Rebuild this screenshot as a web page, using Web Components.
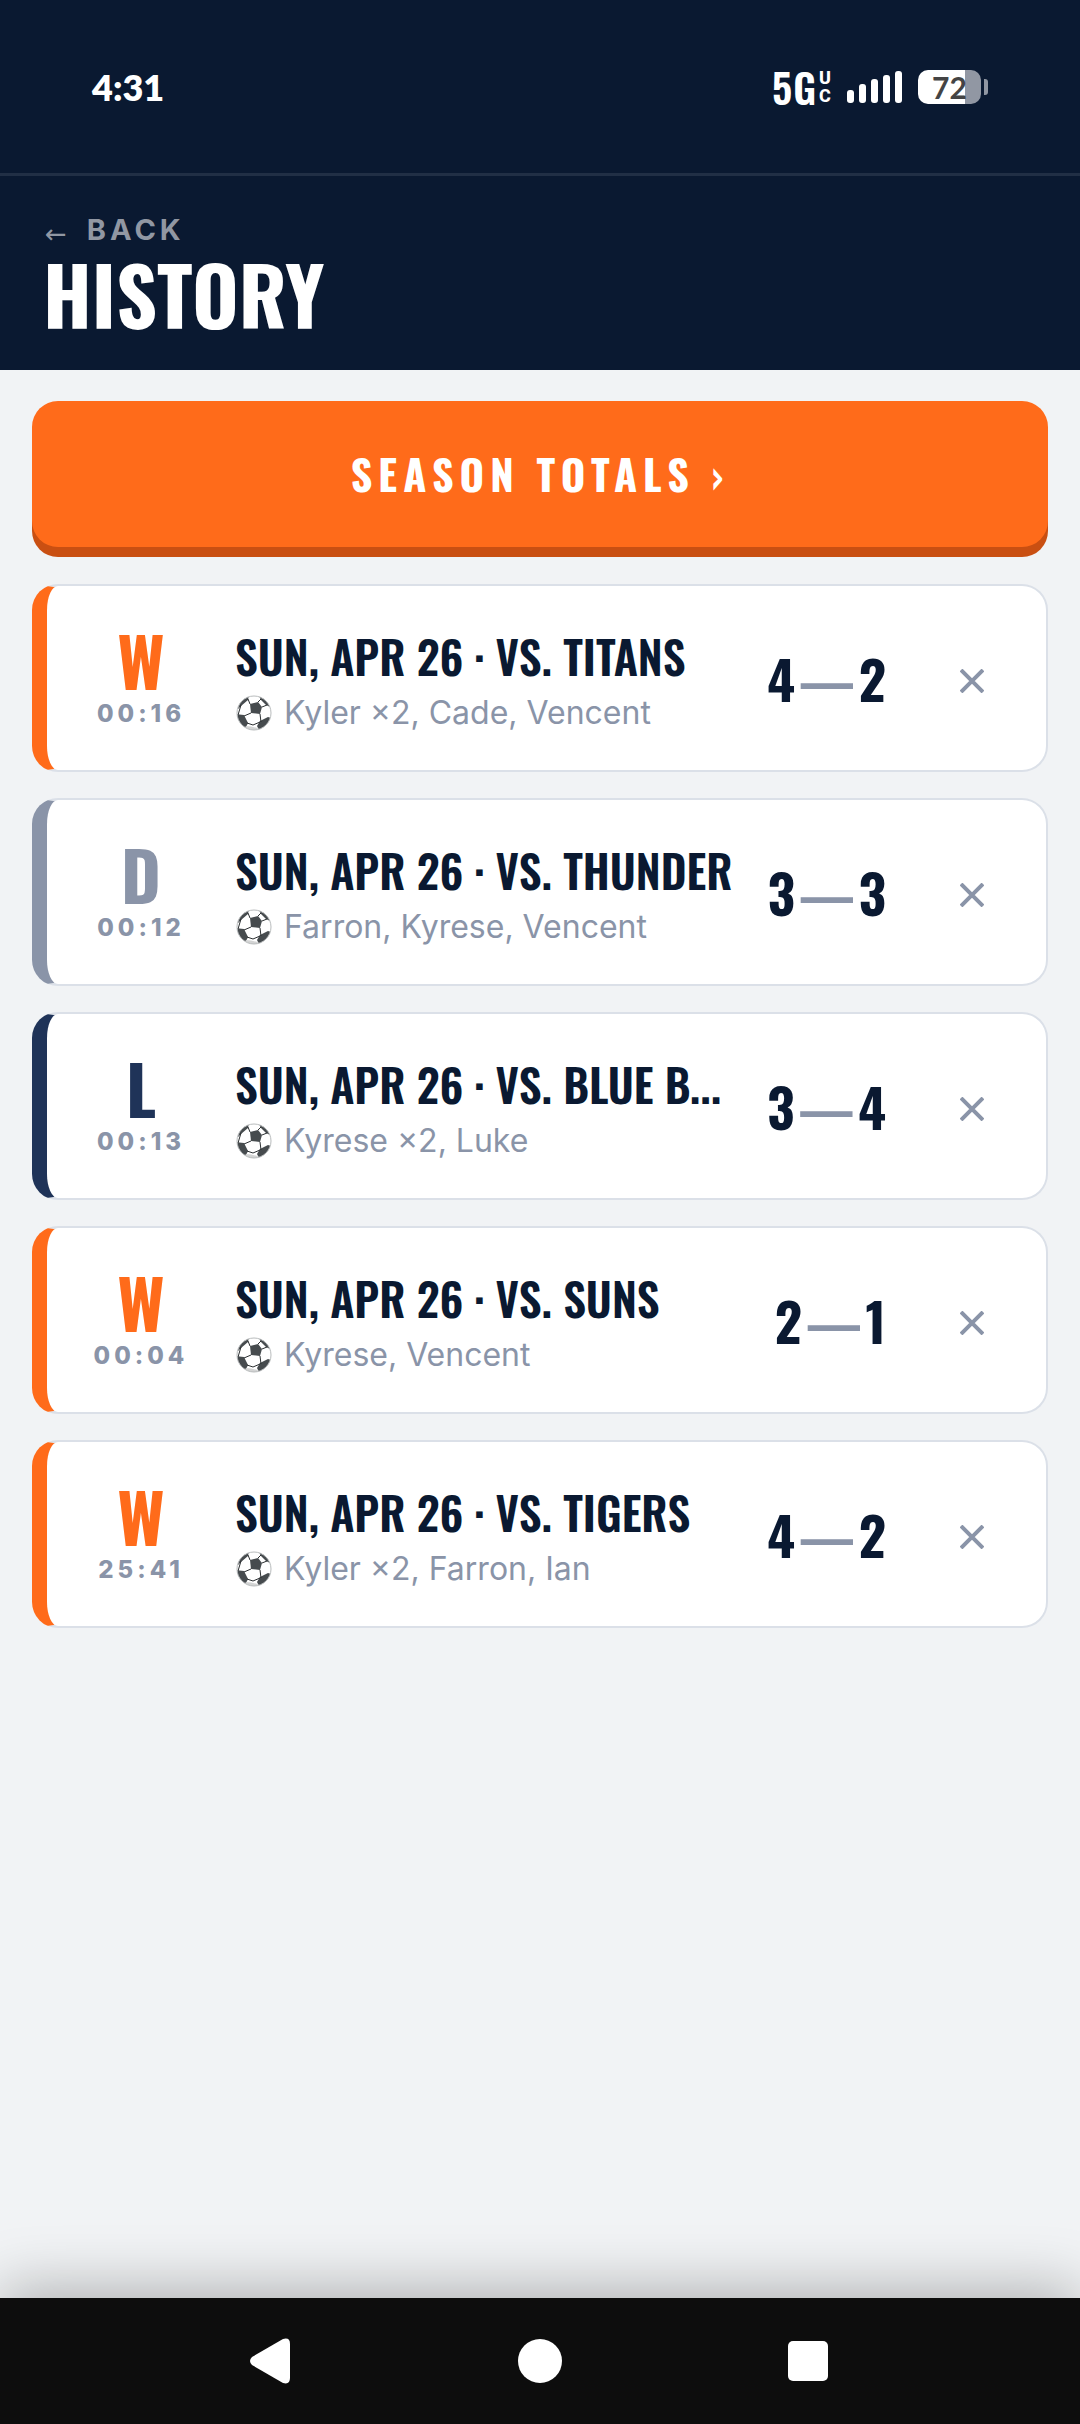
<!DOCTYPE html>
<html lang="en">
<head>
<meta charset="utf-8">
<meta name="viewport" content="width=device-width, initial-scale=1">
<title>History</title>
<style>
    :root {
        --navy: #0a1931;
        --orange: #ff6b1a;
        --orange-dark: #c94f12;
        --muted: #8a94a8;
        --loss: #1f3358;
        --line: #dbe0e8;
        --page: #f1f3f5;
        --display: "Oswald", "Liberation Sans Narrow", "Liberation Sans", sans-serif;
    }

    body {
        margin: 0;
        background: var(--page);
        color: var(--navy);
        font-family: Inter, sans-serif;
    }
</style>
</head>
<body>
<history-page>
    <status-bar slot="top" time="4:31" battery="72"></status-bar>
    <page-header slot="top" heading="HISTORY"></page-header>

    <season-button>SEASON TOTALS ›</season-button>
    <match-card result="W" time="00:16" home="4" away="2">
        SUN, APR 26 · VS. TITANS
        <span slot="scorers">Kyler ×2, Cade, Vencent</span>
    </match-card>
    <match-card result="D" time="00:12" home="3" away="3">
        SUN, APR 26 · VS. THUNDER
        <span slot="scorers">Farron, Kyrese, Vencent</span>
    </match-card>
    <match-card result="L" time="00:13" home="3" away="4">
        SUN, APR 26 · VS. BLUE B...
        <span slot="scorers">Kyrese ×2, Luke</span>
    </match-card>
    <match-card result="W" time="00:04" home="2" away="1">
        SUN, APR 26 · VS. SUNS
        <span slot="scorers">Kyrese, Vencent</span>
    </match-card>
    <match-card result="W" time="25:41" home="4" away="2">
        SUN, APR 26 · VS. TIGERS
        <span slot="scorers">Kyler ×2, Farron, Ian</span>
    </match-card>

    <nav-bar slot="bottom"></nav-bar>
</history-page>

<script>
class HistoryPage extends HTMLElement {
    connectedCallback() {
        if (this.shadowRoot) return;
        this.attachShadow({ mode: 'open' });
        this.shadowRoot.innerHTML = `
            <style>
                :host {
                    display: flex;
                    flex-direction: column;
                    min-height: 100vh;
                }

                main {
                    flex: 1;
                    display: flex;
                    flex-direction: column;
                    gap: 26px;
                    padding: 31px 32px;
                }
            </style>
            <slot name="top"></slot>
            <main><slot></slot></main>
            <slot name="bottom"></slot>
        `;
    }
}
customElements.define('history-page', HistoryPage);

class StatusBar extends HTMLElement {
    connectedCallback() {
        if (this.shadowRoot) return;
        this.attachShadow({ mode: 'open' });
        this.shadowRoot.innerHTML = `
            <style>
                :host {
                    display: flex;
                    justify-content: space-between;
                    align-items: center;
                    box-sizing: border-box;
                    height: 176px;
                    padding: 0 92px;
                    border-bottom: 3px solid #212f45;
                    background: var(--navy);
                    color: #fff;
                    font-family: Lato, sans-serif;
                    font-weight: 700;
                }

                .time {
                    font-size: 36px;
                    font-weight: 800;
                }

                .icons {
                    display: flex;
                    align-items: center;
                    gap: 16px;
                }

                .network {
                    display: flex;
                    align-items: center;
                    gap: 2px;
                    font-family: var(--display);
                    font-size: 40px;
                    font-weight: 600;
                    letter-spacing: 1px;
                }

                .network small {
                    display: flex;
                    flex-direction: column;
                    font-family: Roboto, sans-serif;
                    font-size: 18px;
                    font-weight: 800;
                    line-height: 18px;
                    letter-spacing: 0;
                }

                .battery {
                    display: flex;
                    align-items: center;
                    gap: 3px;
                }

                .level {
                    width: 63px;
                    height: 34px;
                    border-radius: 10px;
                    background: linear-gradient(90deg, #fff 75%, #9197a3 75%);
                    color: #444;
                    font-size: 30px;
                    line-height: 34px;
                    text-align: center;
                }

                .tip {
                    width: 4px;
                    height: 16px;
                    border-radius: 0 3px 3px 0;
                    background: #9197a3;
                }
            </style>
            <span class="time">${this.getAttribute('time')}</span>
            <div class="icons">
                <span class="network">5G<small><span>U</span><span>C</span></small></span>
                <svg width="55" height="32" viewBox="0 0 55 32" fill="#fff">
                    <rect x="0" y="19" width="7" height="13" rx="3"/>
                    <rect x="12" y="13" width="7" height="19" rx="3"/>
                    <rect x="24" y="8" width="7" height="24" rx="3"/>
                    <rect x="36" y="4" width="7" height="28" rx="3"/>
                    <rect x="48" y="0" width="7" height="32" rx="3"/>
                </svg>
                <div class="battery">
                    <div class="level">${this.getAttribute('battery')}</div>
                    <div class="tip"></div>
                </div>
            </div>
        `;
    }
}
customElements.define('status-bar', StatusBar);

class PageHeader extends HTMLElement {
    connectedCallback() {
        if (this.shadowRoot) return;
        this.attachShadow({ mode: 'open' });
        this.shadowRoot.innerHTML = `
            <style>
                :host {
                    display: block;
                    padding: 36px 43px 32px;
                    background: var(--navy);
                    color: #fff;
                }

                a {
                    display: flex;
                    align-items: end;
                    gap: 16px;
                    width: max-content;
                    height: 36px;
                    padding-left: 2px;
                    color: #9197a3;
                    font-size: 29px;
                    font-weight: 700;
                    line-height: 36px;
                    letter-spacing: 4px;
                    text-decoration: none;
                }

                a span {
                    font-family: "DejaVu Sans", sans-serif;
                    font-size: 26px;
                    font-weight: 400;
                    line-height: 28px;
                }

                h1 {
                    margin: 0;
                    font-family: var(--display);
                    font-size: 80px;
                    font-weight: 700;
                    line-height: 90px;
                }
            </style>
            <a href="#"><span>←</span>BACK</a>
            <h1>${this.getAttribute('heading')}</h1>
        `;
    }
}
customElements.define('page-header', PageHeader);

class SeasonButton extends HTMLElement {
    connectedCallback() {
        if (this.shadowRoot) return;
        this.attachShadow({ mode: 'open' });
        this.shadowRoot.innerHTML = `
            <style>
                :host {
                    display: block;
                    padding-bottom: 11px;
                }

                button {
                    display: block;
                    width: 100%;
                    height: 146px;
                    padding: 0 0 2px;
                    border: 0;
                    border-radius: 26px;
                    background: var(--orange);
                    box-shadow: 0 10px 0 var(--orange-dark);
                    color: #fff;
                    font-family: var(--display);
                    font-size: 42px;
                    font-weight: 700;
                    letter-spacing: 6px;
                    cursor: pointer;
                }
            </style>
            <button type="button"><slot></slot></button>
        `;
    }
}
customElements.define('season-button', SeasonButton);

class MatchCard extends HTMLElement {
    connectedCallback() {
        if (this.shadowRoot) return;
        this.attachShadow({ mode: 'open' });
        this.shadowRoot.innerHTML = `
            <style>
                :host {
                    --result: var(--orange);
                    display: flex;
                    align-items: center;
                    gap: 28px;
                    box-sizing: border-box;
                    height: 188px;
                    padding: 0 28px 0 36px;
                    border: 2px solid var(--line);
                    border-left: 15px solid var(--result);
                    border-radius: 26px;
                    background: #fff;
                }

                :host([result="D"]) { --result: var(--muted); }
                :host([result="L"]) { --result: var(--loss); }

                .result {
                    width: 116px;
                    padding-top: 4px;
                    color: var(--muted);
                    font-size: 24px;
                    font-weight: 800;
                    line-height: 40px;
                    letter-spacing: 4px;
                    text-align: center;
                }

                .result b {
                    display: block;
                    color: var(--result);
                    font-family: var(--display);
                    font-size: 68px;
                    font-weight: 700;
                    line-height: 68px;
                    letter-spacing: 0;
                }

                .info {
                    flex: 1;
                    min-width: 0;
                    padding-left: 8px;
                }

                h2 {
                    margin: 0;
                    overflow: hidden;
                    font-family: var(--display);
                    font-size: 45px;
                    font-weight: 600;
                    line-height: 70px;
                    text-overflow: ellipsis;
                    white-space: nowrap;
                }

                p {
                    display: flex;
                    align-items: center;
                    gap: 12px;
                    margin: 0;
                    color: var(--muted);
                    font-size: 32px;
                    line-height: 44px;
                    white-space: nowrap;
                }

                .score {
                    display: flex;
                    justify-content: flex-end;
                    gap: 4px;
                    margin-right: 12px;
                    font-family: var(--display);
                    font-size: 53px;
                    font-weight: 700;
                    line-height: 72px;
                }

                .score span {
                    color: var(--muted);
                }

                button {
                    display: grid;
                    place-items: center;
                    width: 92px;
                    height: 92px;
                    padding: 5px 0 0;
                    border: 0;
                    background: none;
                    cursor: pointer;
                }
            </style>
            <div class="result"><b>${this.getAttribute('result')}</b>${this.getAttribute('time')}</div>
            <div class="info">
                <h2><slot></slot></h2>
                <p>
                    <svg width="37" height="36" viewBox="0 0 37 36" aria-hidden="true">
                        <defs><clipPath id="ball"><circle cx="19" cy="18" r="17"/></clipPath></defs>
                        <circle cx="19" cy="18" r="17" fill="#fff"/>
                        <g clip-path="url(#ball)">
                            <g fill="#464b4e">
                                <path d="M15 9L23 7L27 12L25 19L16 18Z"/>
                                <path d="M4 6L14 0L13 5L6 11L3 14Z"/>
                                <path d="M24 1L31 3L35 12L31 10L26 5Z"/>
                                <path d="M0 19L9 20L13 28L11 32L0 31Z"/>
                                <path d="M25 26L33 22L36 23L32 33L24 35L22 31Z"/>
                            </g>
                            <path d="M11 31Q18 31 24 34L20 37L9 34Z" fill="#d3d4d4"/>
                            <path d="M13 4L15 9M23 7L26 4M27 12L32 10M25 19L26 27M16 18L9 21M6 10L3 20M12 28L18 30L25 27" fill="none" stroke="#2b2f31" stroke-width="1"/>
                        </g>
                        <circle cx="19" cy="18" r="17" fill="none" stroke="#b9bcbd" stroke-width="1"/>
                    </svg>
                    <slot name="scorers"></slot>
                </p>
            </div>
            <div class="score">${this.getAttribute('home')}<span>—</span>${this.getAttribute('away')}</div>
            <button type="button" aria-label="Delete match">
                <svg width="24" height="24" viewBox="0 0 24 24" stroke="#8a94a8" stroke-width="4">
                    <path d="M1 1L23 23M23 1L1 23"/>
                </svg>
            </button>
        `;
    }
}
customElements.define('match-card', MatchCard);

class NavBar extends HTMLElement {
    connectedCallback() {
        if (this.shadowRoot) return;
        this.attachShadow({ mode: 'open' });
        this.shadowRoot.innerHTML = `
            <style>
                :host {
                    display: flex;
                    justify-content: center;
                    height: 126px;
                    background: #0d0d0d;
                    box-shadow: 0 -10px 60px rgba(0, 0, 0, .27);
                }

                button {
                    display: grid;
                    place-items: center;
                    flex: 0 0 25%;
                    padding: 0;
                    border: 0;
                    background: none;
                    cursor: pointer;
                }
            </style>
            <button type="button" aria-label="Back">
                <svg width="46" height="46" viewBox="0 0 46 46" fill="#fff">
                    <path d="M5 19L36 1Q43 -1 43 6V40Q43 47 36 45L5 27Q1 23 5 19Z"/>
                </svg>
            </button>
            <button type="button" aria-label="Home">
                <svg width="46" height="46" viewBox="0 0 46 46" fill="#fff">
                    <circle cx="23" cy="23" r="22"/>
                </svg>
            </button>
            <button type="button" aria-label="Recent apps">
                <svg width="46" height="46" viewBox="0 0 46 46" fill="#fff">
                    <rect x="1" y="3" width="40" height="40" rx="5"/>
                </svg>
            </button>
        `;
    }
}
customElements.define('nav-bar', NavBar);
</script>
</body>
</html>
